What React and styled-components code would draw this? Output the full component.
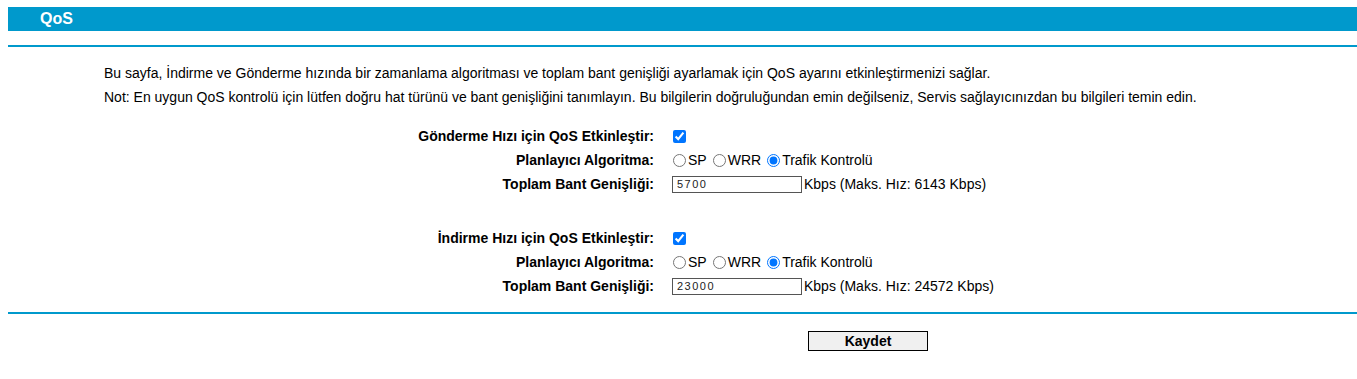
import React from 'react'
import styled, { createGlobalStyle } from 'styled-components'

const BLUE = '#0099cc'

const GlobalStyle = createGlobalStyle`
  body {
    margin: 0;
    background: #fff;
    font-family: "Liberation Sans", Arial, sans-serif;
    font-size: 14px;
    color: #000;
  }
`

const Page = styled.div`
  padding: 7px 0 0 8px;
`

const TitleBar = styled.div`
  height: 24px;
  background: ${BLUE};
  display: flex;
  align-items: center;
  padding-left: 32px;
`

const Title = styled.h1`
  margin: 0;
  font-size: 16px;
  font-weight: bold;
  color: #fff;
`

const Rule = styled.hr`
  border: none;
  height: 2px;
  background: ${BLUE};
  margin: ${p => p.$margin};
`

const Intro = styled.div`
  padding-left: 96px;
  margin-bottom: 15px;
  line-height: 24px;
`

const Section = styled.div`
  display: grid;
  grid-template-columns: 664px 1fr;
  grid-auto-rows: 24px;
  margin-bottom: ${p => p.$gap || 0}px;
`

const Label = styled.div`
  font-weight: bold;
  text-align: right;
  padding-right: 18px;
  display: flex;
  align-items: center;
  justify-content: flex-end;
`

const Field = styled.div`
  display: flex;
  align-items: center;
  white-space: pre;
`

const Check = styled.input.attrs({ type: 'checkbox' })`
  width: 13px;
  height: 13px;
  margin: 0 0 0 1px;
`

const Radio = styled.input.attrs({ type: 'radio' })`
  width: 13px;
  height: 13px;
  margin: 0 2px 0 1px;
`

const RadioLabel = styled.label`
  display: inline-flex;
  align-items: center;
  margin-right: 5px;
`

const TextBox = styled.input.attrs({ type: 'text' })`
  box-sizing: border-box;
  width: 130px;
  height: 17px;
  margin: 0 2px 0 0;
  padding: 0 4px;
  border: 1px solid #555;
  font-family: "Liberation Sans", Arial, sans-serif;
  font-size: 11px;
  letter-spacing: 1.5px;
  color: #222;
`

const Actions = styled.div`
  padding-left: 800px;
`

const SaveButton = styled.button`
  width: 120px;
  height: 20px;
  background: #f0f0f0;
  border: 1px solid #000;
  font-family: "Liberation Sans", Arial, sans-serif;
  font-size: 14px;
  font-weight: bold;
  color: #000;
  padding: 0;
`

const QosGroup = ({ name, enableLabel, bandwidth, max, gap }) => (
  <Section $gap={gap}>
    <Label>{enableLabel}</Label>
    <Field>
      <Check defaultChecked />
    </Field>
    <Label>Planlayıcı Algoritma:</Label>
    <Field>
      <RadioLabel>
        <Radio name={name} />SP
      </RadioLabel>
      <RadioLabel>
        <Radio name={name} />WRR
      </RadioLabel>
      <RadioLabel>
        <Radio name={name} defaultChecked />Trafik Kontrolü
      </RadioLabel>
    </Field>
    <Label>Toplam Bant Genişliği:</Label>
    <Field>
      <TextBox defaultValue={bandwidth} />
      Kbps (Maks. Hız: {max} Kbps)
    </Field>
  </Section>
)

const App = () => (
  <Page>
    <GlobalStyle />
    <TitleBar>
      <Title>QoS</Title>
    </TitleBar>
    <Rule $margin="14px 0 14px 0" />
    <Intro>
      <div>Bu sayfa, İndirme ve Gönderme hızında bir zamanlama algoritması ve toplam bant genişliği ayarlamak için QoS ayarını etkinleştirmenizi sağlar.</div>
      <div>Not: En uygun QoS kontrolü için lütfen doğru hat türünü ve bant genişliğini tanımlayın. Bu bilgilerin doğruluğundan emin değilseniz, Servis sağlayıcınızdan bu bilgileri temin edin.</div>
    </Intro>
    <QosGroup
      name="up"
      enableLabel="Gönderme Hızı için QoS Etkinleştir:"
      bandwidth="5700"
      max="6143"
      gap={30}
    />
    <QosGroup
      name="down"
      enableLabel="İndirme Hızı için QoS Etkinleştir:"
      bandwidth="23000"
      max="24572"
    />
    <Rule $margin="14px 0 17px 0" />
    <Actions>
      <SaveButton>Kaydet</SaveButton>
    </Actions>
  </Page>
)

export default App
